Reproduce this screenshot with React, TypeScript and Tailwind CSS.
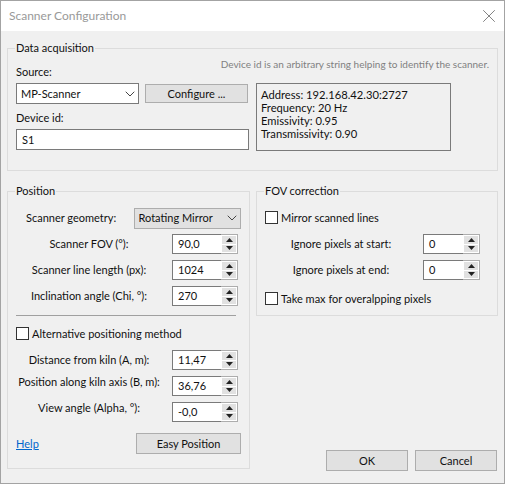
import { ChevronDown, X } from "lucide-react";

const font = "font-['Lato','Noto_Sans',sans-serif]";

function Group({
  title,
  className,
  children,
}: {
  title: string;
  className: string;
  children: React.ReactNode;
}) {
  return (
    <div className={`relative border border-[#dcdcdc] ${className}`}>
      <span className="absolute left-[7px] top-[-9px] bg-[#f0f0f0] px-[1px] leading-[16px]">
        {title}
      </span>
      {children}
    </div>
  );
}

function Spin({ value, width }: { value: string; width: string }) {
  return (
    <div className={`flex h-[20px] shrink-0 ${width}`}>
      <div className="flex flex-1 items-center border border-r-0 border-[#7a7a7a] bg-white pl-[5px]">
        {value}
      </div>
      <div className="flex w-[17px] flex-col gap-[1px] border border-l-0 border-[#adadad] bg-white p-[1px]">
        <div className="flex flex-1 items-center justify-center bg-[#e1e1e1]">
          <svg width="7" height="4" viewBox="0 0 7 4">
            <path d="M3.5 0L7 4H0z" fill="#222" />
          </svg>
        </div>
        <div className="flex flex-1 items-center justify-center bg-[#e1e1e1]">
          <svg width="7" height="4" viewBox="0 0 7 4">
            <path d="M0 0h7L3.5 4z" fill="#222" />
          </svg>
        </div>
      </div>
    </div>
  );
}

function Check({ label }: { label: string }) {
  return (
    <div className="flex h-[13px] items-center gap-[3px] whitespace-nowrap">
      <div className="h-[13px] w-[13px] shrink-0 border border-[#333] bg-white" />
      <span>{label}</span>
    </div>
  );
}

function Button({ label, className }: { label: string; className: string }) {
  return (
    <div
      className={`flex items-center justify-center border border-[#adadad] bg-[#e1e1e1] ${className}`}
    >
      {label}
    </div>
  );
}

function Row({
  label,
  value,
  raise,
}: {
  label: string;
  value: string;
  raise?: boolean;
}) {
  return (
    <div className="flex items-center">
      <span
        className={`w-[156px] whitespace-nowrap pr-[10px] text-center ${raise ? "-translate-y-[4px]" : ""}`}
      >
        {label}
      </span>
      <Spin value={value} width="w-[66px]" />
    </div>
  );
}

function PixelRow({ label }: { label: string }) {
  return (
    <div className="flex items-center">
      <span className="w-[158px] whitespace-nowrap pr-[6px] text-center">{label}</span>
      <Spin value="0" width="w-[57px]" />
    </div>
  );
}

export default function App() {
  return (
    <div
      className={`flex h-[484px] w-[505px] flex-col overflow-hidden border border-[#a3a3a3] bg-[#f0f0f0] text-[11px] leading-[14px] text-[#111] ${font}`}
    >
      <div className="flex h-[30px] shrink-0 items-center justify-between bg-white pl-[8px] pr-[4px]">
        <span className="text-[12px] text-[#999]">Scanner Configuration</span>
        <X className="h-[22px] w-[22px] text-[#777]" strokeWidth={1} />
      </div>

      <div className="flex flex-1 flex-col px-[6px] pt-[17px]">
        <Group title="Data acquisition" className="h-[123px] pl-[8px] pt-[17px]">
          <span className="absolute right-[8px] top-[8px] text-[10px] text-[#808080]">
            Device id is an arbitrary string helping to identify the scanner.
          </span>
          <div className="flex gap-[7px]">
            <div className="w-[233px]">
              <div className="flex h-[12px] items-center">Source:</div>
              <div className="mt-[5px] flex gap-[6px]">
                <div className="flex h-[21px] w-[123px] items-center justify-between border border-[#7a7a7a] bg-white pl-[4px]">
                  MP-Scanner
                  <ChevronDown
                    className="h-[16px] w-[16px] text-[#444]"
                    strokeWidth={1.5}
                  />
                </div>
                <Button label="Configure ..." className="mt-[1px] h-[19px] w-[103px]" />
              </div>
              <div className="mt-[7px] flex h-[14px] items-center">Device id:</div>
              <div className="mt-[4px] flex h-[21px] items-center border border-[#7a7a7a] bg-white pl-[5px]">
                S1
              </div>
            </div>
            <div className="mt-[17px] h-[68px] w-[195px] border border-[#7a7a7a] pl-[4px] pt-[4px] text-[11.2px] leading-[13px]">
              <div>Address: 192.168.42.30:2727</div>
              <div>Frequency: 20 Hz</div>
              <div>Emissivity: 0.95</div>
              <div>Transmissivity: 0.90</div>
            </div>
          </div>
        </Group>

        <div className="mt-[20px] flex flex-1 gap-[6px] pb-[12px]">
          <Group title="Position" className="h-[278px] w-[243px] shrink-0 px-[8px] pt-[15px]">
            <div className="flex h-[22px] items-center whitespace-nowrap">
              <span className="w-[119px] pl-[10px]">Scanner geometry:</span>
              <div className="flex h-[21px] w-[107px] items-center justify-between border border-[#adadad] bg-[#e1e1e1] pl-[3px]">
                Rotating Mirror
                <ChevronDown
                  className="h-[16px] w-[16px] text-[#444]"
                  strokeWidth={1.5}
                />
              </div>
            </div>
            <div className="mt-[5px] flex flex-col gap-[6px]">
              <Row label="Scanner FOV (°):" value="90,0" />
              <Row label="Scanner line length (px):" value="1024" />
              <Row label="Inclination angle (Chi, °):" value="270" />
            </div>
            <div className="mr-[5px] mt-[9px] border-t border-[#a0a0a0]" />
            <div className="mt-[11px]">
              <Check label="Alternative positioning method" />
            </div>
            <div className="mt-[10px] flex flex-col gap-[6px]">
              <Row label="Distance from kiln (A, m):" value="11,47" />
              <Row label="Position along kiln axis (B, m):" value="36,76" raise />
              <Row label="View angle (Alpha, °):" value="-0,0" raise />
            </div>
            <div className="mt-[11px] flex items-center justify-between">
              <span className="text-[#0066cc] underline">Help</span>
              <Button label="Easy Position" className="h-[21px] w-[105px]" />
            </div>
          </Group>

          <div className="flex flex-1 flex-col">
            <Group title="FOV correction" className="h-[125px] pl-[8px] pt-[19px]">
              <Check label="Mirror scanned lines" />
              <div className="mt-[10px] flex flex-col gap-[6px]">
                <PixelRow label="Ignore pixels at start:" />
                <PixelRow label="Ignore pixels at end:" />
              </div>
              <div className="mt-[12px]">
                <Check label="Take max for overalpping pixels" />
              </div>
            </Group>
            <div className="mr-[1px] mt-auto flex justify-end gap-[7px]">
              <Button label="OK" className="h-[21px] w-[82px]" />
              <Button label="Cancel" className="h-[21px] w-[82px]" />
            </div>
          </div>
        </div>
      </div>
    </div>
  );
}
